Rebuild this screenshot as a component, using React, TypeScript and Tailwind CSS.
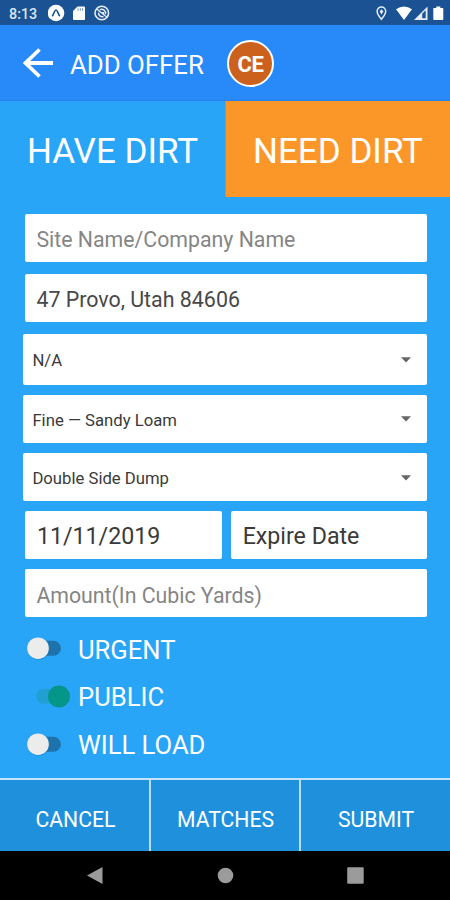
import type { ReactNode } from "react";

function Caret() {
  return (
    <svg width="10" height="6" viewBox="0 0 10 6" className="mt-px mr-4 shrink-0">
      <path d="M0 0.300h10L5 5.5z" fill="#666" />
    </svg>
  );
}

function Field({ children, className }: { children: ReactNode; className: string }) {
  return <div className={`flex items-center whitespace-nowrap rounded-[2px] bg-white ${className}`}>{children}</div>;
}

function Select({ label, className }: { label: string; className: string }) {
  return (
    <Field className={`ml-[23.4px] w-[404px] justify-between pl-[9px] text-[16.7px] text-[#3a3a3a] ${className}`}>
      <span className="pt-[3px]">{label}</span>
      <Caret />
    </Field>
  );
}

function Toggle({ label, on = false }: { label: string; on?: boolean }) {
  return (
    <div className="flex h-[47.7px] items-center text-white">
      <svg width="51" height="26" viewBox="0 0 51 26" className="shrink-0">
        {on ? (
          <>
            <rect x="9" y="5.8" width="28" height="15" rx="7.5" fill="#22a0d3" />
            <circle cx="32" cy="13.5" r="11" fill="#049688" />
          </>
        ) : (
          <>
            <rect x="6" y="5.700" width="28" height="15" rx="7.5" fill="#1e73ad" />
            <circle cx="11.3" cy="13.9" r="11" fill="#1e80c4" opacity=".5" />
            <circle cx="11" cy="13.200" r="10.8" fill="#ececec" />
          </>
        )}
      </svg>
      <span className="pt-[4px] text-[25.600px] leading-none">{label}</span>
    </div>
  );
}

export default function App() {
  return (
    <div className="flex h-[900px] w-[450px] flex-col overflow-hidden bg-[#29a5f7] font-[Roboto,sans-serif]">
      <div className="flex h-[25px] shrink-0 items-center bg-[#1a5294] pl-[9px] text-white">
        <span className="w-[39px] pt-[3px] text-[14.300px] leading-none font-medium text-[#dbe5f2]">8:13</span>
        <svg width="64" height="18" viewBox="0 0 64 18" className="mt-px shrink-0">
          <circle cx="8" cy="9" r="8.3" fill="#fff" />
          <path d="M4.3 12.2C6 9.5 6.8 6 8 6s2 3.500 3.700 6.200" fill="none" stroke="#1a5294" strokeWidth="1.600" />
          <path d="M29.500 2.500h6.500q1 0 1 1v11.500q0 1-1 1h-10q-1 0-1-1V7z" fill="#fff" />
          <path d="M30 4.300v2.500M32.300 4.300v2.500M34.600 4.300v2.500" stroke="#7191bd" strokeWidth="1" />
          <circle cx="53.800" cy="9" r="6.800" fill="none" stroke="#e6edf6" strokeWidth="1.600" />
          <path d="M48.800 5l10.500 8.500M50.500 8.500a3.800 3.800 0 0 0 5 4M51.800 5.700a4 4 0 0 1 5.700 4.500M53 8.700h2.500v2" fill="none" stroke="#e6edf6" strokeWidth="1.400" />
        </svg>
        <svg width="70" height="18" viewBox="0 0 70 18" className="mr-[4px] ml-auto shrink-0">
          <path d="M5.400 3a4.300 4.300 0 0 1 4.300 4.300c0 3-4.300 8-4.300 8s-4.300-5-4.300-8A4.300 4.300 0 0 1 5.400 3z" fill="none" stroke="#e6edf6" strokeWidth="1.500" />
          <path d="M5.400 5.200l2 2.200-2 3.200-1.700-3.200z" fill="#e6edf6" />
          <path d="M20 5.200Q28 0 36 5.200L28 16z" fill="#fff" />
          <path d="M38 16L51.500 2.500V16z" fill="#e6edf6" />
          <path d="M46.200 9.800L49.700 6.300v7.900h-3.500z" fill="#1a5294" />
          <path d="M60.300 2.500h4v1.500h2.200q.800 0 .800.800v10.400q0 .800-.800.800h-8.400q-.8 0-.8-.800V4.800q0-.8.800-.8h2.200z" fill="#fff" />
        </svg>
      </div>

      <div className="flex h-[76px] shrink-0 items-center border-b border-[#287fec] bg-[#2889f9] pl-[23px] text-white">
        <svg width="31" height="30" viewBox="0 0 31 30" className="mt-px mr-4 shrink-0">
          <path d="M30 15H3M16.500 1.500L2.500 15l14 13.500" fill="none" stroke="#fff" strokeWidth="3.800" />
        </svg>
        <span className="w-[157px] pt-[6px] text-[25.800px] leading-none whitespace-nowrap">ADD OFFER</span>
        <div className="mt-px flex size-[47px] shrink-0 items-center justify-center rounded-full border-2 border-white bg-[#cc611e] pt-[3px] text-[22px] leading-none font-bold tracking-[-0.500px]">
          CE
        </div>
      </div>

      <div className="grid h-[96px] shrink-0 grid-cols-2 text-[35px] leading-none whitespace-nowrap text-white">
        <div className="flex items-center justify-center pt-[4px]">HAVE DIRT</div>
        <div className="flex items-center justify-center border-l border-[#7ba39f] bg-[#fb9729] pt-[4px]">NEED DIRT</div>
      </div>

      <div className="flex flex-1 flex-col">
        <Field className="mt-[17.400px] ml-[25.400px] h-[48px] w-[402px] pt-[3px] pl-[11px] text-[21.300px] text-[#858585]">Site Name/Company Name</Field>
        <Field className="mt-[12px] ml-[25.400px] h-[48px] w-[402px] pt-[3px] pl-[11px] text-[21.400px] text-[#484848]">47 Provo, Utah 84606</Field>
        <Select label="N/A" className="mt-[11.600px] h-[51px]" />
        <Select label="Fine — Sandy Loam" className="mt-[10px] h-[48px]" />
        <Select label="Double Side Dump" className="mt-[10.500px] h-[48px]" />
        <div className="mt-[9.500px] ml-[25.400px] flex w-[402px] gap-[9.500px] text-[23.200px] text-[#3a3a3a]">
          <Field className="h-[48px] flex-1 pt-[3px] pl-[11.500px]">11/11/2019</Field>
          <Field className="h-[48px] flex-1 pt-[3px] pl-[11.500px]">Expire Date</Field>
        </div>
        <Field className="mt-[10.500px] ml-[25.400px] h-[48px] w-[402px] pt-[4px] pl-[11px] text-[21.300px] text-[#858585]">Amount(In Cubic Yards)</Field>
        <div className="mt-[7px] pl-[27px]">
          <Toggle label="URGENT" />
          <Toggle label="PUBLIC" on />
          <Toggle label="WILL LOAD" />
        </div>
      </div>

      <div className="flex h-[73.500px] shrink-0 border-t-2 border-[#c4e2fa] bg-[#1f91dc] text-[21.200px] leading-none text-white">
        <div className="flex w-[151px] items-center justify-center border-r-2 border-[#b9dcf7] pt-[8px] pl-[2px]">CANCEL</div>
        <div className="flex w-[150px] items-center justify-center border-r-2 border-[#b9dcf7] pt-[8px] pl-px">MATCHES</div>
        <div className="flex flex-1 items-center justify-center pt-[8px] pl-px">SUBMIT</div>
      </div>

      <div className="flex h-[49px] shrink-0 items-center bg-black pl-[86px]">
        <svg width="280" height="20" viewBox="0 0 280 20">
          <path d="M1 9.500L16.500 1v17z" fill="#9b9b9b" />
          <circle cx="139.500" cy="9.500" r="7.800" fill="#9b9b9b" />
          <rect x="261.200" y="1.300" width="16.500" height="16.500" rx="1" fill="#9b9b9b" />
        </svg>
      </div>
    </div>
  );
}
